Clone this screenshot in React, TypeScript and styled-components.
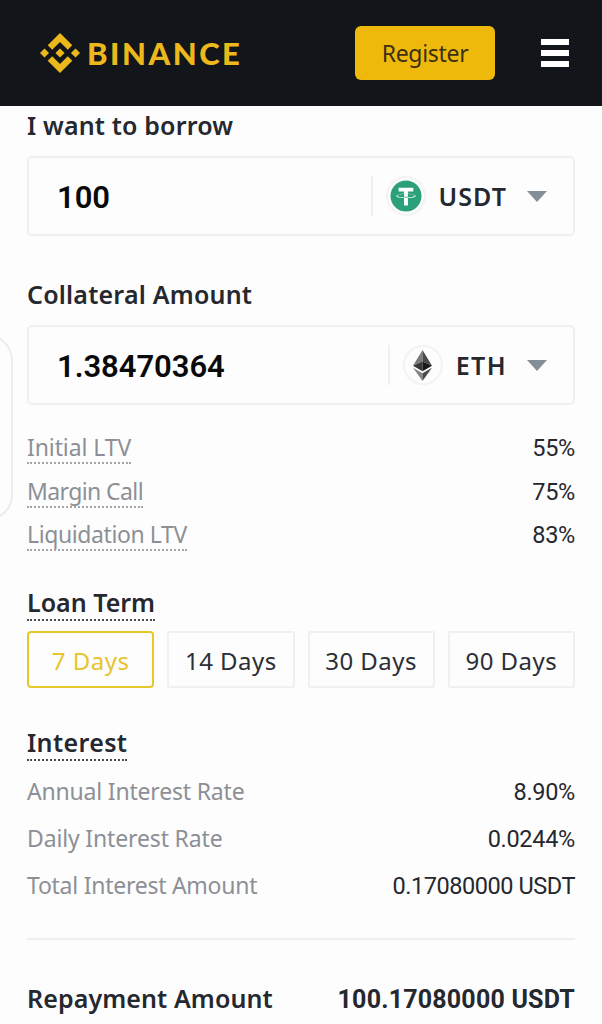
import React from 'react';
import styled, { createGlobalStyle } from 'styled-components';

const GlobalStyle = createGlobalStyle`
  * { box-sizing: border-box; }
  body {
    margin: 0;
    background: #fdfdfd;
    color: #25282e;
    font-family: 'Noto Sans', 'Liberation Sans', sans-serif;
  }
`;

const Page = styled.div`
  position: relative;
  height: 1024px;
  overflow: hidden;
`;

const Header = styled.header`
  display: flex;
  align-items: center;
  height: 106px;
  padding: 0 33px 0 40px;
  background: #12161a;
`;

const Brand = styled.div`
  display: flex;
  align-items: center;
  gap: 7px;
  flex: 1;
`;

const BrandName = styled.span`
  padding-bottom: 1px;
  font: 900 31px/40px Lato, sans-serif;
  letter-spacing: 2.5px;
  color: #ecb81c;
`;

const RegisterButton = styled.button`
  width: 140px;
  height: 54px;
  padding: 0 0 1px;
  border: 0;
  border-radius: 6px;
  background: #efb90b;
  color: #3b3014;
  font: 400 23px/30px 'Noto Sans', sans-serif;
  letter-spacing: -0.3px;
`;

const MenuButton = styled.div`
  display: flex;
  flex-direction: column;
  gap: 5px;
  width: 28px;
  margin-left: 46px;
`;

const MenuBar = styled.span`
  height: 6px;
  background: #fff;
`;

const Main = styled.main`
  display: flex;
  flex-direction: column;
  padding: 0 27px;
`;

const Title = styled.h2<{ $top: number; $track?: number }>`
  height: 36px;
  margin: ${p => p.$top}px 0 0;
  font-size: 25px;
  font-weight: 600;
  line-height: 34px;
  letter-spacing: ${p => p.$track ?? 0}px;
`;

const DottedTitle = styled(Title)`
  align-self: flex-start;
  border-bottom: 2px dotted #4a4d53;
`;

const AmountField = styled.div<{ $top: number }>`
  display: flex;
  align-items: center;
  height: 80px;
  margin-top: ${p => p.$top}px;
  padding: 0 26px 0 28px;
  border: 2px solid #f0f0f1;
  border-radius: 5px;
`;

const Amount = styled.span`
  flex: 1;
  padding-top: 3px;
  color: #0a0a0b;
  font: 600 31px/40px Roboto, sans-serif;
  letter-spacing: -0.05px;
`;

const Divider = styled.span`
  width: 2px;
  height: 40px;
  margin-right: 13px;
  background: #f0f0f2;
`;

const CoinBadge = styled.span`
  display: flex;
  align-items: center;
  justify-content: center;
  width: 40px;
  height: 40px;
  margin-right: 13px;
  border: 2px solid #f3f3f4;
  border-radius: 50%;
`;

const Coin = styled.span<{ $track: number }>`
  margin-right: 20px;
  padding-bottom: 1px;
  font-size: 25px;
  font-weight: 600;
  line-height: 36px;
  letter-spacing: ${p => p.$track}px;
`;

const Rows = styled.dl<{ $top: number; $pitch: number }>`
  display: grid;
  grid-auto-rows: ${p => p.$pitch}px;
  margin: ${p => p.$top}px 0 0;
`;

const Row = styled.div`
  display: flex;
  justify-content: space-between;
  align-items: flex-start;
`;

const Label = styled.dt<{ $dotted?: boolean; $track: number }>`
  height: 32px;
  color: #8c9096;
  font-size: 23px;
  line-height: 30px;
  letter-spacing: ${p => p.$track}px;
  border-bottom: ${p => (p.$dotted ? '2px dotted #a3a6ab' : '0')};
`;

const Value = styled.dd<{ $track?: number }>`
  margin: 0;
  font: 400 23.5px/32px Roboto, sans-serif;
  letter-spacing: ${p => p.$track ?? -0.3}px;
`;

const Terms = styled.div`
  display: grid;
  grid-template-columns: repeat(4, 1fr);
  gap: 13px;
  margin-top: 10px;
`;

const Term = styled.button<{ $active?: boolean }>`
  height: 57px;
  padding: 2px 0 0;
  border: 2px solid ${p => (p.$active ? '#e6c929' : '#f0f0f1')};
  border-radius: ${p => (p.$active ? 4 : 2)}px;
  background: transparent;
  color: ${p => (p.$active ? '#e8c430' : '#2c2f35')};
  font: 400 24px/34px 'Noto Sans', sans-serif;
  letter-spacing: 0.5px;
`;

const Rule = styled.hr`
  width: 100%;
  height: 2px;
  margin: 21px 0 0;
  border: 0;
  background: #efeff0;
`;

const Total = styled.div`
  display: flex;
  justify-content: space-between;
  align-items: flex-start;
  margin-top: 41px;
`;

const TotalValue = styled.strong`
  font: 700 25px/37px Roboto, sans-serif;
  letter-spacing: 0.2px;
`;

const SideHandle = styled.div`
  position: absolute;
  left: -60px;
  top: 335px;
  width: 73px;
  height: 185px;
  border: 2px solid #ececee;
  border-radius: 25px;
`;

const BinanceMark = () => (
  <svg width="40" height="40" viewBox="0 0 126.61 126.61" fill="#ecb81c">
    <path d="M38.73 53.2 63.3 28.63l24.58 24.58 14.3-14.3L63.3 0 24.43 38.9z" />
    <path d="M0 63.31 14.3 49l14.3 14.31-14.3 14.3z" />
    <path d="M38.73 73.41 63.3 97.99l24.58-24.59 14.31 14.29L63.3 126.61 24.41 87.73z" />
    <path d="M98 63.31 112.3 49l14.31 14.3-14.3 14.31z" />
    <path d="M77.83 63.3 63.3 48.78 48.77 63.3 63.3 77.83z" />
  </svg>
);

const TetherIcon = () => (
  <svg width="32" height="32" viewBox="0 0 32 32">
    <circle cx="16" cy="16" r="15.5" fill="#2ba17b" />
    <path
      fill="#fff"
      d="M17.92 17.38c-.11.01-.68.04-1.94.04-1.01 0-1.72-.03-1.97-.04-3.89-.17-6.79-.85-6.79-1.66s2.9-1.49 6.79-1.66v2.64c.25.02.98.06 1.99.06 1.21 0 1.81-.05 1.92-.06v-2.64c3.88.17 6.78.85 6.78 1.66s-2.9 1.49-6.78 1.66m0-3.59v-2.37h5.41V7.82H8.6v3.6h5.41v2.37c-4.4.2-7.7 1.07-7.7 2.12s3.3 1.92 7.7 2.12v7.58h3.91v-7.58c4.39-.2 7.69-1.07 7.69-2.12s-3.3-1.92-7.69-2.12"
    />
  </svg>
);

const EthereumIcon = () => (
  <svg width="19" height="31" viewBox="0 0 19 31">
    <path d="M9.5 0 0 15.7l9.5-4.2z" fill="#7c7c7c" />
    <path d="M9.5 0 19 15.7l-9.5-4.2z" fill="#4a4a4a" />
    <path d="M0 15.7l9.5-4.3v9.9z" fill="#383838" />
    <path d="M19 15.7l-9.5-4.3v9.9z" fill="#191919" />
    <path d="M0 17.8l9.5 5.5V31z" fill="#858585" />
    <path d="M19 17.8l-9.5 5.5V31z" fill="#4b4b4b" />
  </svg>
);

const Caret = () => (
  <svg width="20" height="11" viewBox="0 0 20 11">
    <path d="M0 0h20L10 11z" fill="#848e96" />
  </svg>
);

const ltvRows = [
  { label: 'Initial LTV', value: '55%', track: -0.1 },
  { label: 'Margin Call', value: '75%', track: -0.6 },
  { label: 'Liquidation LTV', value: '83%', track: -0.4 },
];

const interestRows = [
  { label: 'Annual Interest Rate', value: '8.90%', track: -0.19, valueTrack: -0.3 },
  { label: 'Daily Interest Rate', value: '0.0244%', track: -0.15, valueTrack: -0.3 },
  { label: 'Total Interest Amount', value: '0.17080000 USDT', track: -0.26, valueTrack: -0.45 },
];

export default function App() {
  return (
    <Page>
      <GlobalStyle />
      <Header>
        <Brand>
          <BinanceMark />
          <BrandName>BINANCE</BrandName>
        </Brand>
        <RegisterButton>Register</RegisterButton>
        <MenuButton>
          <MenuBar />
          <MenuBar />
          <MenuBar />
        </MenuButton>
      </Header>
      <Main>
        <Title $top={2} $track={0.15}>I want to borrow</Title>
        <AmountField $top={12}>
          <Amount>100</Amount>
          <Divider />
          <CoinBadge><TetherIcon /></CoinBadge>
          <Coin $track={1.05}>USDT</Coin>
          <Caret />
        </AmountField>
        <Title $top={41} $track={0.2}>Collateral Amount</Title>
        <AmountField $top={12}>
          <Amount>1.38470364</Amount>
          <Divider />
          <CoinBadge><EthereumIcon /></CoinBadge>
          <Coin $track={1.4}>ETH</Coin>
          <Caret />
        </AmountField>
        <Rows $top={27} $pitch={43.5}>
          {ltvRows.map(r => (
            <Row key={r.label}>
              <Label $dotted $track={r.track}>{r.label}</Label>
              <Value>{r.value}</Value>
            </Row>
          ))}
        </Rows>
        <DottedTitle $top={22.5}>Loan Term</DottedTitle>
        <Terms>
          <Term $active>7 Days</Term>
          <Term>14 Days</Term>
          <Term>30 Days</Term>
          <Term>90 Days</Term>
        </Terms>
        <DottedTitle $top={37} $track={0.37}>Interest</DottedTitle>
        <Rows $top={15} $pitch={47}>
          {interestRows.map(r => (
            <Row key={r.label}>
              <Label $track={r.track}>{r.label}</Label>
              <Value $track={r.valueTrack}>{r.value}</Value>
            </Row>
          ))}
        </Rows>
        <Rule />
        <Total>
          <Title as="span" $top={0} $track={0.1}>Repayment Amount</Title>
          <TotalValue>100.17080000 USDT</TotalValue>
        </Total>
      </Main>
      <SideHandle />
    </Page>
  );
}
